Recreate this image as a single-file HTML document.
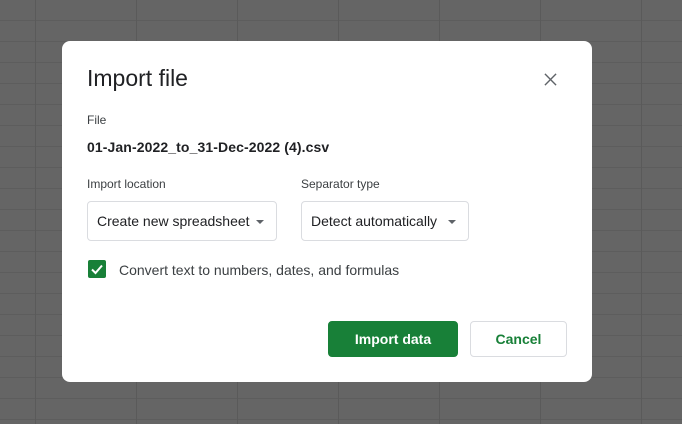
<!DOCTYPE html>
<html><head><style>
body{margin:0;width:682px;height:424px;overflow:hidden;font-family:"Liberation Sans",Arial,sans-serif;
background-color:#656565;
background-image:linear-gradient(to right,#5a5a5a 1px,transparent 1px),linear-gradient(to bottom,#5d5d5d 1px,transparent 1px);
background-size:101px 21px;background-position:35px 20px;position:relative}
.d{position:absolute;left:62px;top:41px;width:530px;height:341px;background:#fff;border-radius:8px}
.t{position:absolute;left:25px;top:24px;font-size:23px;color:#202124}
.x{position:absolute;left:482px;top:32px}
.l{position:absolute;font-size:12px;color:#3c4043}
.b{position:absolute;font-size:14px;font-weight:bold;color:#202124;letter-spacing:0.1px}
.s{position:absolute;top:160px;height:40px;border:1px solid #dadce0;border-radius:4px;box-sizing:border-box;font-size:14px;color:#202124;line-height:38px;padding-left:9px}
.s:after{content:"";position:absolute;right:12px;top:18px;border:4px solid transparent;border-top-color:#5f6368;border-bottom:0}
.cb{position:absolute;left:26px;top:219px;width:18px;height:18px;background:#188038;border-radius:2px}
.btn{position:absolute;top:280px;height:36px;border-radius:4px;box-sizing:border-box;font-size:14px;font-weight:bold;text-align:center;line-height:34px}
</style></head><body>
<div class="d">
<div class="t">Import file</div>
<svg class="x" width="13" height="13" viewBox="0 0 14 14"><path d="M1 1L13 13M13 1L1 13" stroke="#5f6368" stroke-width="1.5"/></svg>
<div class="l" style="left:25px;top:72px">File</div>
<div class="b" style="left:25px;top:98px">01-Jan-2022_to_31-Dec-2022 (4).csv</div>
<div class="l" style="left:25px;top:136px">Import location</div>
<div class="l" style="left:239px;top:136px">Separator type</div>
<div class="s" style="left:25px;width:190px">Create new spreadsheet</div>
<div class="s" style="left:239px;width:168px">Detect automatically</div>
<div class="cb"><svg width="18" height="18" viewBox="0 0 18 18"><path d="M4 9.5L7.5 13L14 5.5" stroke="#fff" stroke-width="2" fill="none"/></svg></div>
<div style="position:absolute;left:57px;top:221px;font-size:14px;color:#3c4043">Convert text to numbers, dates, and formulas</div>
<div class="btn" style="left:266px;width:130px;background:#188038;color:#fff;border:1px solid #188038">Import data</div>
<div class="btn" style="left:408px;width:97px;border:1px solid #dadce0;color:#188038">Cancel</div>
</div>
</body></html>
